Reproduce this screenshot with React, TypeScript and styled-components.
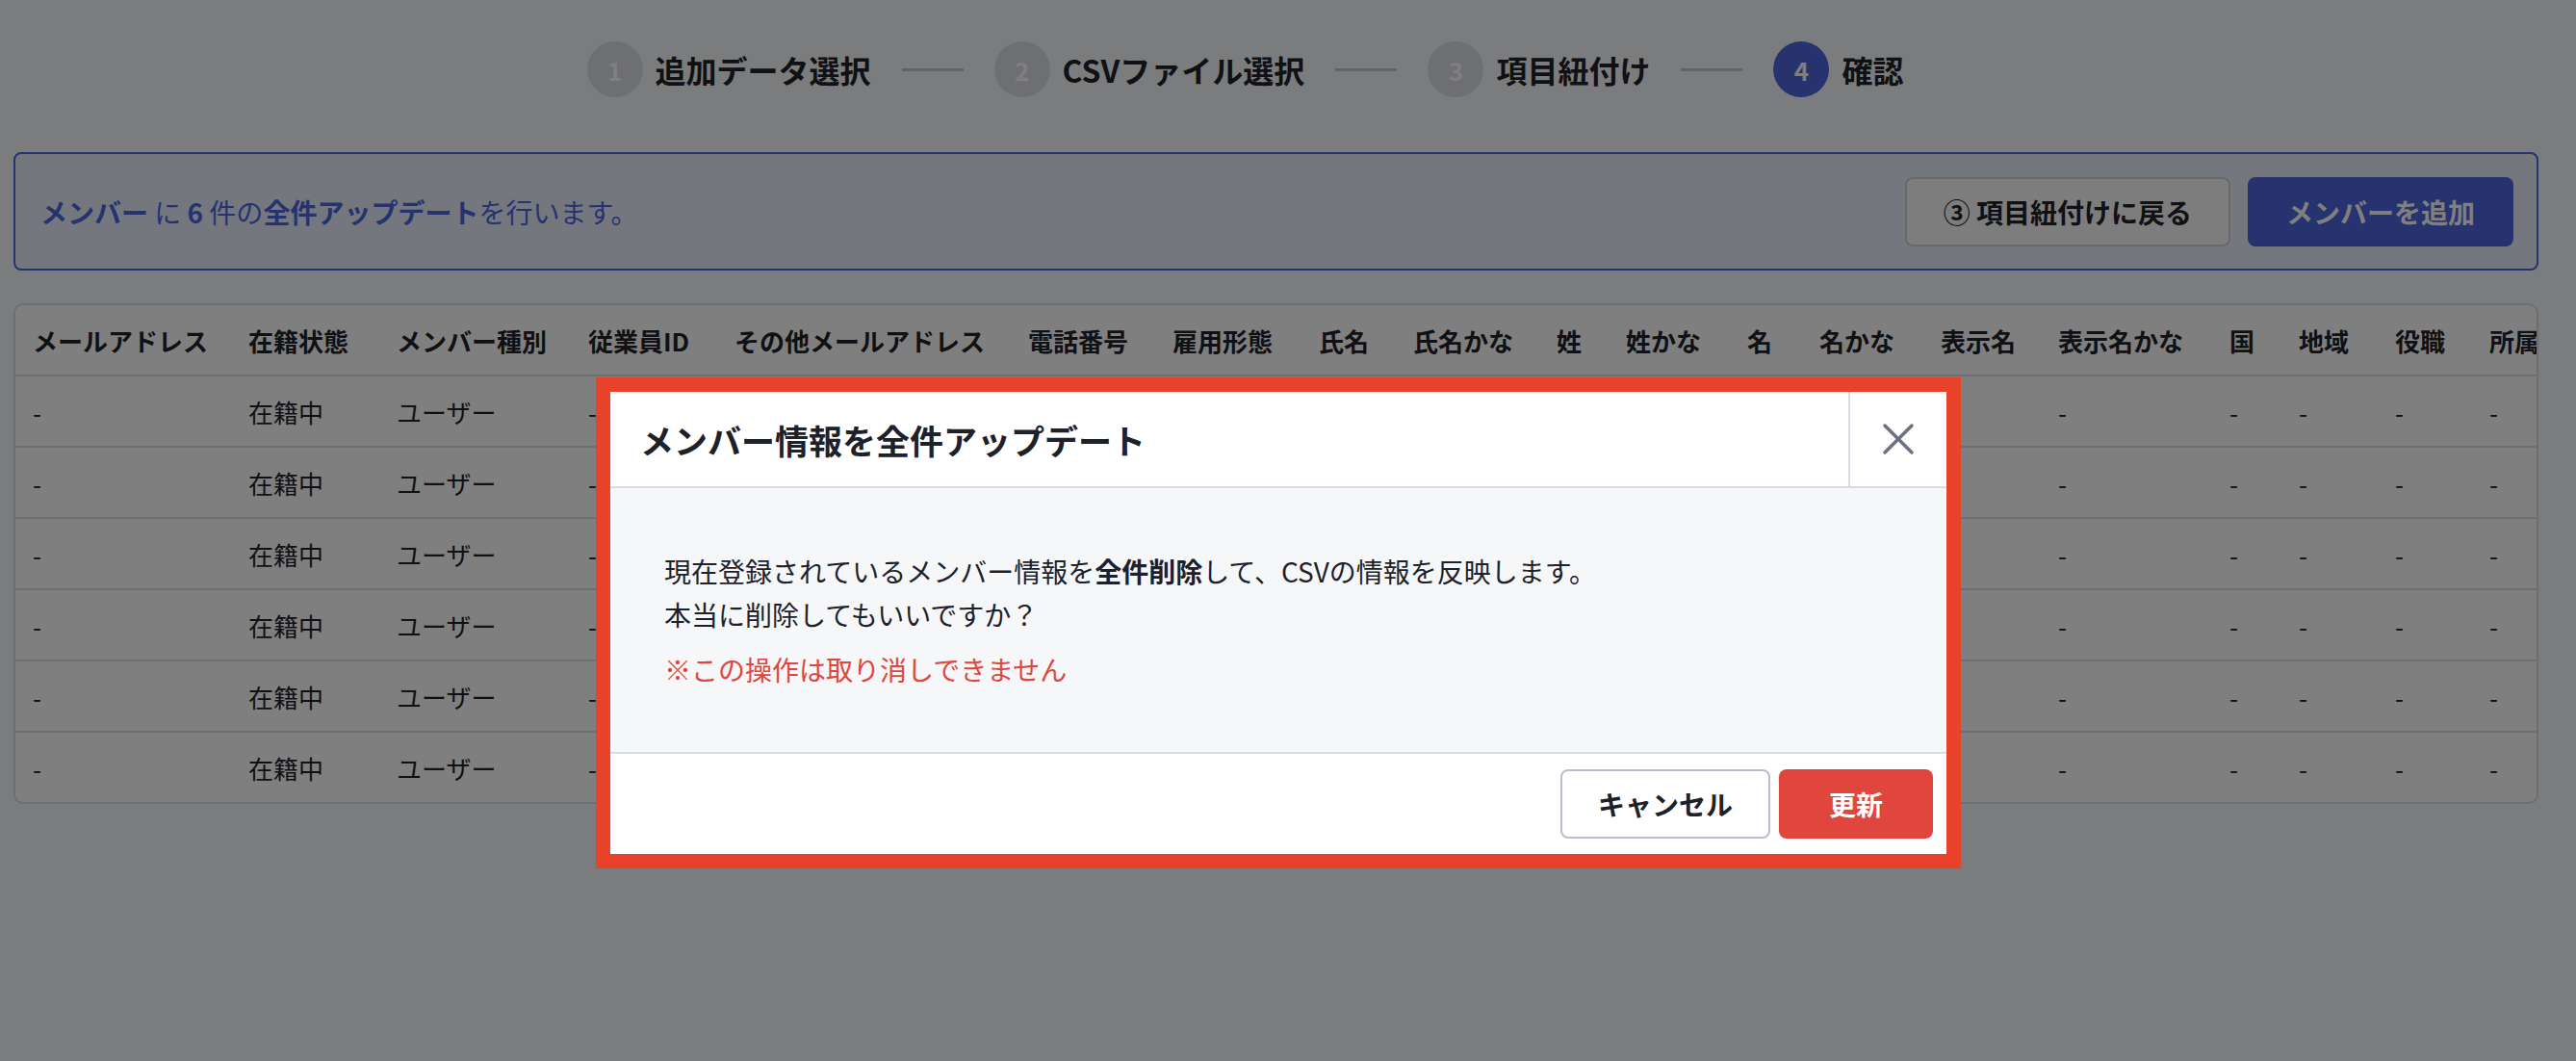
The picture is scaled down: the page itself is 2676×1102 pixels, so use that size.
import React from "react";
import styled, { createGlobalStyle } from "styled-components";
import { X } from "lucide-react";

const primary = "#4c66df";
const ink = "#1f2329";
const line = "#d9dce3";

const GlobalStyle = createGlobalStyle`
  html, body {
    margin: 0;
    padding: 0;
  }
  body {
    background: #f7f8fb;
    font-family: "Noto Sans CJK JP", "Noto Sans", sans-serif;
    color: ${ink};
  }
  * {
    box-sizing: border-box;
  }
`;

const steps = ["追加データ選択", "CSVファイル選択", "項目紐付け", "確認"];

const columns = [
  { label: "メールアドレス", width: 224 },
  { label: "在籍状態", width: 154 },
  { label: "メンバー種別", width: 199 },
  { label: "従業員ID", width: 152 },
  { label: "その他メールアドレス", width: 305 },
  { label: "電話番号", width: 150 },
  { label: "雇用形態", width: 152 },
  { label: "氏名", width: 98 },
  { label: "氏名かな", width: 149 },
  { label: "姓", width: 72 },
  { label: "姓かな", width: 126 },
  { label: "名", width: 75 },
  { label: "名かな", width: 126 },
  { label: "表示名", width: 122 },
  { label: "表示名かな", width: 178 },
  { label: "国", width: 72 },
  { label: "地域", width: 100 },
  { label: "役職", width: 98 },
  { label: "所属", width: 150 },
];

const gridTemplate = columns.map((c) => c.width + "px").join(" ");

const rows = Array.from({ length: 6 }, () =>
  columns.map((_, i) => (i === 1 ? "在籍中" : i === 2 ? "ユーザー" : "-"))
);

export default function App() {
  return (
    <>
      <GlobalStyle />
      <Page>
        <Steps>
          {steps.map((label, i) => (
            <React.Fragment key={label}>
              {i > 0 && <Connector />}
              <StepItem>
                <StepCircle $active={i === steps.length - 1}>{i + 1}</StepCircle>
                <StepLabel>{label}</StepLabel>
              </StepItem>
            </React.Fragment>
          ))}
        </Steps>

        <Alert>
          <AlertText>
            <b>メンバー</b> に <b>6</b> 件の<b>全件アップデート</b>を行います。
          </AlertText>
          <AlertActions>
            <BackButton>③ 項目紐付けに戻る</BackButton>
            <PrimaryButton>メンバーを追加</PrimaryButton>
          </AlertActions>
        </Alert>

        <TableWrap>
          <HeadRow $cols={gridTemplate}>
            {columns.map((c) => (
              <HeadCell key={c.label}>{c.label}</HeadCell>
            ))}
          </HeadRow>
          {rows.map((r, ri) => (
            <BodyRow key={ri} $cols={gridTemplate}>
              {r.map((v, ci) => (
                <BodyCell key={ci}>{v}</BodyCell>
              ))}
            </BodyRow>
          ))}
        </TableWrap>
      </Page>

      <Overlay>
        <Dialog>
          <DialogHeader>
            <DialogTitle>メンバー情報を全件アップデート</DialogTitle>
            <CloseButton aria-label="close">
              <X size={56} strokeWidth={1.5} color="#6b7180" />
            </CloseButton>
          </DialogHeader>
          <DialogBody>
            <p>
              現在登録されているメンバー情報を<b>全件削除</b>して、CSVの情報を反映します。
              <br />
              本当に削除してもいいですか？
            </p>
            <Warning>※この操作は取り消しできません</Warning>
          </DialogBody>
          <DialogFooter>
            <CancelButton>キャンセル</CancelButton>
            <DangerButton>更新</DangerButton>
          </DialogFooter>
        </Dialog>
      </Overlay>
    </>
  );
}

const Page = styled.div`
  min-height: 1102px;
  padding: 43px 39px 0 14px;
`;

const Steps = styled.div`
  display: flex;
  align-items: center;
  justify-content: center;
  padding-right: 64px;
  margin-bottom: 57px;
`;

const StepItem = styled.div`
  display: flex;
  align-items: center;
  gap: 13px;
`;

const StepCircle = styled.div<{ $active: boolean }>`
  width: 58px;
  height: 58px;
  border-radius: 50%;
  background: ${(p) => (p.$active ? primary : "#dcdee4")};
  color: #fff;
  font-size: 26px;
  font-weight: 700;
  display: flex;
  align-items: center;
  justify-content: center;
`;

const StepLabel = styled.span`
  font-size: 32px;
  font-weight: 700;
  line-height: 1;
  color: ${ink};
`;

const Connector = styled.div`
  width: 64px;
  height: 3px;
  background: #c4c6cc;
  margin: 0 32px;
`;

const Alert = styled.div`
  height: 123px;
  display: flex;
  align-items: center;
  justify-content: space-between;
  padding: 0 24px 0 26px;
  border: 2px solid ${primary};
  border-radius: 8px;
  background: #e8eefc;
  margin-bottom: 34px;
`;

const AlertText = styled.p`
  margin: 0;
  font-size: 28px;
  color: ${primary};

  b {
    font-weight: 700;
  }
`;

const AlertActions = styled.div`
  display: flex;
  gap: 18px;
`;

const BaseButton = styled.button`
  height: 72px;
  border-radius: 8px;
  font-family: inherit;
  font-size: 28px;
  font-weight: 700;
  cursor: pointer;
`;

const BackButton = styled(BaseButton)`
  padding: 0 38px;
  background: #fafafa;
  border: 2px solid #cfd0d5;
  color: ${ink};
`;

const PrimaryButton = styled(BaseButton)`
  padding: 0 40px;
  background: ${primary};
  border: none;
  color: #fff;
`;

const TableWrap = styled.div`
  background: #fff;
  border: 2px solid ${line};
  border-radius: 10px;
  overflow: hidden;
`;

const HeadRow = styled.div<{ $cols: string }>`
  display: grid;
  grid-template-columns: ${(p) => p.$cols};
  height: 74px;
  border-bottom: 2px solid ${line};
`;

const BodyRow = styled(HeadRow)`
  &:last-child {
    height: 72px;
    border-bottom: none;
  }
`;

const HeadCell = styled.div`
  display: flex;
  align-items: center;
  padding-left: 18px;
  white-space: nowrap;
  font-size: 26px;
  font-weight: 700;
`;

const BodyCell = styled(HeadCell)`
  font-weight: 400;
`;

const Overlay = styled.div`
  position: fixed;
  inset: 0;
  background: rgba(0, 0, 0, 0.5);
  display: flex;
  justify-content: center;
  align-items: flex-start;
  padding: 392px 39px 0 19px;
`;

const Dialog = styled.div`
  width: 1418px;
  background: #fff;
  border: 15px solid #e8432a;
`;

const DialogHeader = styled.div`
  display: flex;
  height: 100px;
  border-bottom: 2px solid #d7dbe3;
`;

const DialogTitle = styled.h2`
  flex: 1;
  margin: 0;
  padding-left: 31px;
  display: flex;
  align-items: center;
  font-size: 35px;
  font-weight: 700;
  color: #1d2129;
`;

const CloseButton = styled.button`
  width: 102px;
  border: none;
  border-left: 2px solid #d7dbe3;
  background: none;
  display: flex;
  align-items: center;
  justify-content: center;
  padding: 0;
  cursor: pointer;
`;

const DialogBody = styled.div`
  background: #f6f7f9;
  padding: 64px 56px 63px;
  font-size: 28px;
  line-height: 45px;
  color: #1d2129;

  p {
    margin: 0;
  }

  b {
    font-weight: 700;
  }
`;

const Warning = styled.p`
  && {
    margin-top: 12px;
  }
  color: #e0463d;
`;

const DialogFooter = styled.div`
  height: 106px;
  border-top: 2px solid #d7dbe3;
  display: flex;
  justify-content: flex-end;
  align-items: center;
  gap: 9px;
  padding: 0 14px;
`;

const CancelButton = styled(BaseButton)`
  padding: 0 37px;
  background: #fff;
  border: 2px solid #b9bfcc;
  color: #1d2129;
`;

const DangerButton = styled(BaseButton)`
  min-width: 160px;
  padding: 0 40px;
  background: #e0463d;
  border: none;
  color: #fff;
`;
